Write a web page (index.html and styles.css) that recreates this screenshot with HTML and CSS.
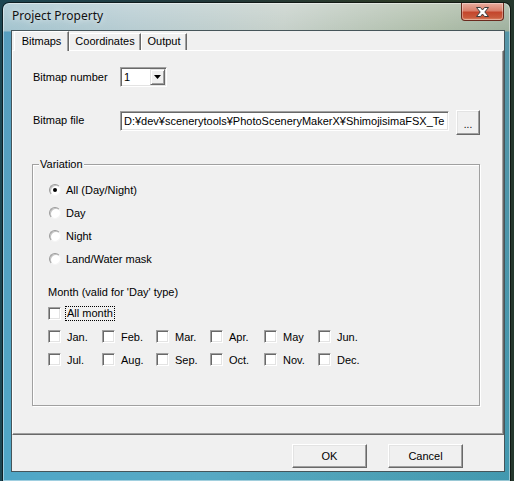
FILE: index.html
```html
<!DOCTYPE html>
<html>
<head>
<meta charset="utf-8">
<title>Project Property</title>
<link rel="stylesheet" href="styles.css">
</head>
<body>
<div class="window">
  <div class="titlebar">
    <span class="title">Project Property</span>
    <div class="close">
      <svg width="17" height="12" viewBox="0 0 17 12"><path d="M2.5 1.5 H6.5 L8.5 4 L10.5 1.5 H14.5 L10.8 6 L14.5 10.5 H10.5 L8.5 8 L6.5 10.5 H2.5 L6.2 6 Z" fill="#fff" stroke="#3c3c3c" stroke-width="1" stroke-linejoin="round"/></svg>
    </div>
  </div>
  <div class="client">
    <div class="tabs">
      <div class="tab active t1">Bitmaps</div>
      <div class="tab t2">Coordinates</div>
      <div class="tab t3">Output</div>
    </div>
    <div class="page">
      <div class="row row-number">
        <span class="label">Bitmap number</span>
        <div class="combo">
          <span class="combo-text">1</span>
          <span class="combo-btn"><svg width="7" height="4" viewBox="0 0 7 4"><path d="M0 0 H7 L3.5 4 Z" fill="#000"/></svg></span>
        </div>
      </div>
      <div class="row row-file">
        <span class="label">Bitmap file</span>
        <div class="field">D:¥dev¥scenerytools¥PhotoSceneryMakerX¥ShimojisimaFSX_Te</div>
        <div class="btn btn-small">...</div>
      </div>
      <div class="group">
        <span class="group-title">Variation</span>
        <div class="radios">
          <div class="radio"><span class="circle on"></span><span>All (Day/Night)</span></div>
          <div class="radio"><span class="circle"></span><span>Day</span></div>
          <div class="radio"><span class="circle"></span><span>Night</span></div>
          <div class="radio"><span class="circle"></span><span>Land/Water mask</span></div>
        </div>
        <div class="months-section">
          <div class="month-label">Month (valid for 'Day' type)</div>
          <div class="check all"><span class="box"></span><span class="focus">All month</span></div>
          <div class="months">
            <div class="check"><span class="box"></span><span>Jan.</span></div>
            <div class="check"><span class="box"></span><span>Feb.</span></div>
            <div class="check"><span class="box"></span><span>Mar.</span></div>
            <div class="check"><span class="box"></span><span>Apr.</span></div>
            <div class="check"><span class="box"></span><span>May</span></div>
            <div class="check"><span class="box"></span><span>Jun.</span></div>
            <div class="check"><span class="box"></span><span>Jul.</span></div>
            <div class="check"><span class="box"></span><span>Aug.</span></div>
            <div class="check"><span class="box"></span><span>Sep.</span></div>
            <div class="check"><span class="box"></span><span>Oct.</span></div>
            <div class="check"><span class="box"></span><span>Nov.</span></div>
            <div class="check"><span class="box"></span><span>Dec.</span></div>
          </div>
        </div>
      </div>
    </div>
    <div class="footer">
      <div class="btn btn-wide">OK</div>
      <div class="btn btn-wide">Cancel</div>
    </div>
  </div>
</div>
</body>
</html>
```

FILE: styles.css
```css
* { box-sizing: border-box; }
html, body { margin: 0; padding: 0; }
body {
  width: 514px;
  height: 481px;
  overflow: hidden;
  background: linear-gradient(to right, #1d4652 0%, #22383a 40%, #2d3a26 80%, #25382e 100%);
  font-family: "Liberation Sans", Arial, sans-serif;
  font-size: 11px;
  color: #000;
}

.window {
  margin: 3px 0 0 3px;
  width: 507px;
  height: 478px;
  border-radius: 6px 6px 0 0;
  display: flex;
  flex-direction: column;
  background:
    linear-gradient(to bottom, rgba(255,255,255,0.28) 0, rgba(255,255,255,0.08) 27px, rgba(255,255,255,0) 28px),
    linear-gradient(to bottom, rgba(0,0,0,0) 0, rgba(0,0,0,0) 28px, rgba(30,130,180,0.55) 29px, rgba(30,150,195,0.65) 100%),
    linear-gradient(100deg, #9bbfcb 0%, #b1c8ce 22%, #c2cdc6 48%, #a8b8a2 74%, #859c8a 100%);
  box-shadow: inset 0 0 0 1px rgba(255,255,255,0.45), 0 0 0 1px rgba(0,0,0,0.55);
}

.titlebar {
  height: 27px;
  display: flex;
  justify-content: space-between;
  align-items: flex-start;
}
.title {
  font-family: "Noto Sans", "DejaVu Sans", sans-serif;
  font-size: 12px;
  line-height: 16px;
  padding: 5px 0 0 9px;
  color: #111;
  text-shadow: 0 0 6px rgba(255,255,255,0.9);
}
.close {
  width: 43px;
  height: 18px;
  margin-right: 6px;
  border: 1px solid #6a2a1e;
  border-top: none;
  border-radius: 0 0 4px 4px;
  background: linear-gradient(to bottom, #e9ad9f 0%, #d9806c 45%, #c4462c 55%, #c85a3c 85%, #e08a6a 100%);
  box-shadow: inset 0 0 0 1px rgba(255,255,255,0.35);
  display: flex;
  align-items: center;
  justify-content: center;
}

.client {
  margin-left: 8px;
  width: 494px;
  height: 442px;
  border: 1px solid #46555a;
  background: #f0f0f0;
  display: flex;
  flex-direction: column;
}

.tabs {
  height: 19px;
  display: flex;
  align-items: flex-end;
  padding-left: 2px;
  position: relative;
  z-index: 1;
}
.tab {
  height: 17px;
  line-height: 15px;
  text-align: center;
  border: 1px solid;
  border-color: #fff #696969 transparent #fff;
  border-bottom: none;
  box-shadow: inset -1px 0 0 #a0a0a0;
  background: #f0f0f0;
}
.t1 { width: 55px; }
.t2 { width: 72px; }
.t3 { width: 46px; }
.tab.active {
  height: 20px;
  line-height: 18px;
  margin-bottom: -1px;
}

.page {
  height: 385px;
  border: 1px solid;
  border-color: #fff #696969 #696969 #fff;
  box-shadow: inset -1px -1px 0 #a0a0a0;
}

.row { display: flex; padding-left: 20px; }
.label { width: 87px; }
.row-number {
  margin-top: 16px;
  height: 20px;
  align-items: center;
}
.combo {
  width: 47px;
  height: 20px;
  border: 1px solid;
  border-color: #a0a0a0 #fff #fff #a0a0a0;
  box-shadow: inset 1px 1px 0 #696969, inset -1px -1px 0 #e3e3e3;
  background: #fff;
  padding: 1px;
  display: flex;
  align-items: stretch;
}
.combo-text {
  flex: 1;
  padding-left: 2px;
  line-height: 16px;
}
.combo-btn {
  width: 15px;
  border: 1px solid;
  border-color: #e3e3e3 #696969 #696969 #e3e3e3;
  box-shadow: inset 1px 1px 0 #fff, inset -1px -1px 0 #a0a0a0;
  background: #f0f0f0;
  display: flex;
  align-items: center;
  justify-content: center;
}

.row-file {
  margin-top: 23px;
  height: 25px;
  align-items: flex-start;
}
.row-file .label { line-height: 21px; }
.field {
  width: 329px;
  height: 20px;
  margin-top: 1px;
  margin-right: 7px;
  border: 1px solid;
  border-color: #a0a0a0 #fff #fff #a0a0a0;
  box-shadow: inset 1px 1px 0 #696969, inset -1px -1px 0 #e3e3e3;
  background: #fff;
  padding: 1px 3px;
  line-height: 16px;
  white-space: nowrap;
  overflow: hidden;
}

.btn {
  background: #f0f0f0;
  border: 1px solid;
  border-color: #fff #696969 #696969 #fff;
  box-shadow: inset -1px -1px 0 #a0a0a0, inset 1px 1px 0 #e3e3e3;
  text-align: center;
}
.btn-small {
  width: 24px;
  height: 25px;
  line-height: 25px;
  font-size: 10px;
  padding-top: 1px;
}
.btn-wide {
  width: 75px;
  height: 24px;
  line-height: 22px;
}

.group {
  position: relative;
  margin: 29px 0 0 19px;
  width: 448px;
  height: 242px;
  border: 1px solid #a0a0a0;
  box-shadow: inset 1px 1px 0 #fff, 1px 1px 0 #fff;
  padding-top: 13px;
}
.group-title {
  position: absolute;
  top: -7px;
  left: 6px;
  padding: 0 1px;
  line-height: 13px;
  background: #f0f0f0;
}

.radios { padding-left: 16px; }
.radio {
  display: flex;
  align-items: center;
  gap: 5px;
  height: 23px;
}
.circle {
  width: 12px;
  height: 12px;
  border-radius: 50%;
  border: 1px solid;
  border-color: #9a9a9a #f4f4f4 #f4f4f4 #9a9a9a;
  box-shadow: inset 1px 1px 0 #c4c4c4;
  background: #fff;
  display: flex;
  align-items: center;
  justify-content: center;
}
.circle.on::after {
  content: "";
  width: 4px;
  height: 4px;
  border-radius: 50%;
  background: #000;
}

.months-section { padding-left: 15px; }
.month-label {
  margin-top: 15px;
  height: 14px;
  line-height: 14px;
}
.check {
  display: flex;
  align-items: center;
  gap: 6px;
  height: 23px;
}
.check.all { margin-top: 3px; gap: 4px; }
.box {
  width: 13px;
  height: 13px;
  flex: none;
  border: 1px solid;
  border-color: #a0a0a0 #fff #fff #a0a0a0;
  box-shadow: inset 1px 1px 0 #696969, inset -1px -1px 0 #e3e3e3;
  background: #fff;
}
.focus {
  border: 1px dotted #000;
  padding: 0 1px;
  line-height: 13px;
}
.months {
  display: grid;
  grid-template-columns: repeat(6, 54px);
  grid-auto-rows: 23px;
}

.footer {
  flex: 1;
  display: flex;
  justify-content: flex-end;
  align-items: flex-start;
  gap: 21px;
  padding: 9px 41px 0 0;
}
```
